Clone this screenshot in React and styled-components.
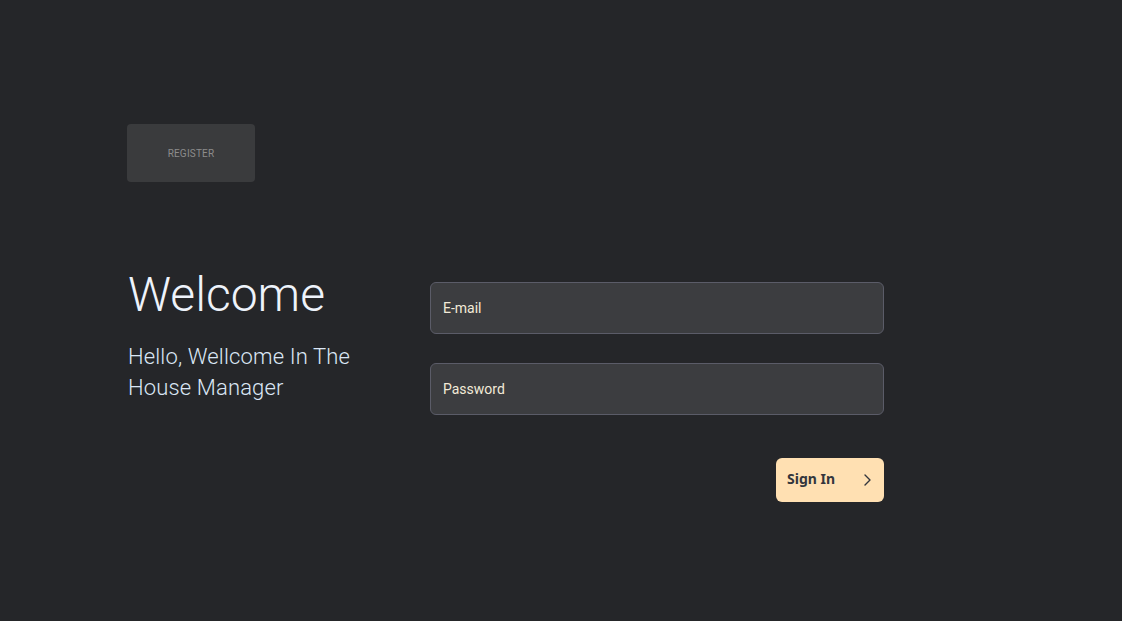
import React from "react";
import styled, { createGlobalStyle } from "styled-components";

const Global = createGlobalStyle`
  html, body { margin: 0; padding: 0; background: #252629; }
  body { font-family: Roboto, "Noto Sans", sans-serif; }
  * { box-sizing: border-box; }
`;

const Page = styled.div`
  min-height: 621px;
  padding: 124px 0 0 127px;
  display: flex;
  flex-direction: column;
`;

const RegisterButton = styled.button`
  width: 128px;
  height: 58px;
  border: none;
  border-radius: 4px;
  background: #3a3b3d;
  color: #8c8c8c;
  font-family: Roboto, sans-serif;
  font-size: 10px;
  letter-spacing: 0.2px;
  text-transform: uppercase;
  cursor: pointer;
`;

const Main = styled.div`
  display: flex;
  margin-top: 88px;
`;

const Intro = styled.div`
  width: 303px;
  padding-left: 1px;
`;

const Title = styled.h1`
  margin: 0;
  font-family: Roboto, sans-serif;
  font-weight: 300;
  font-size: 48px;
  line-height: 50px;
  color: #eef3fb;
`;

const Subtitle = styled.p`
  margin: 21px 0 0;
  font-family: Roboto, sans-serif;
  font-weight: 300;
  font-size: 22px;
  line-height: 31px;
  letter-spacing: 0.15px;
  color: #dbe6f5;
  width: 250px;
`;

const Form = styled.form`
  width: 454px;
  margin-top: 12px;
  display: flex;
  flex-direction: column;
  gap: 29px;
`;

const Field = styled.input`
  width: 100%;
  height: 52px;
  padding: 0 12px 1px;
  border: 1px solid #5b5c68;
  border-radius: 6px;
  background: #3c3d40;
  color: #f2ead8;
  font-family: Roboto, sans-serif;
  font-size: 14px;
  outline: none;
  &::placeholder { color: #f2ead8; opacity: 1; }
`;

const Actions = styled.div`
  display: flex;
  justify-content: flex-end;
  margin-top: 14px;
`;

const SignInButton = styled.button`
  width: 108px;
  height: 44px;
  border: none;
  border-radius: 6px;
  background: #ffe0b2;
  color: #33363d;
  font-family: "Noto Sans", sans-serif;
  font-weight: 700;
  font-size: 14px;
  display: flex;
  align-items: center;
  justify-content: space-between;
  padding: 0 12px 3px 11px;
  cursor: pointer;
`;

const Chevron = () => (
  <svg width="10" height="14" viewBox="0 0 10 14" fill="none" style={{ marginTop: 2 }}>
    <path d="M3 2l5 5-5 5" stroke="#33363d" strokeWidth="1.4" strokeLinecap="round" strokeLinejoin="round" />
  </svg>
);

export default function App() {
  return (
    <>
      <Global />
      <Page>
        <div>
          <RegisterButton type="button">Register</RegisterButton>
        </div>
        <Main>
          <Intro>
            <Title>Welcome</Title>
            <Subtitle>Hello, Wellcome In The House Manager</Subtitle>
          </Intro>
          <Form onSubmit={(e) => e.preventDefault()}>
            <Field type="email" placeholder="E-mail" />
            <Field type="password" placeholder="Password" />
            <Actions>
              <SignInButton type="submit">
                Sign In
                <Chevron />
              </SignInButton>
            </Actions>
          </Form>
        </Main>
      </Page>
    </>
  );
}
